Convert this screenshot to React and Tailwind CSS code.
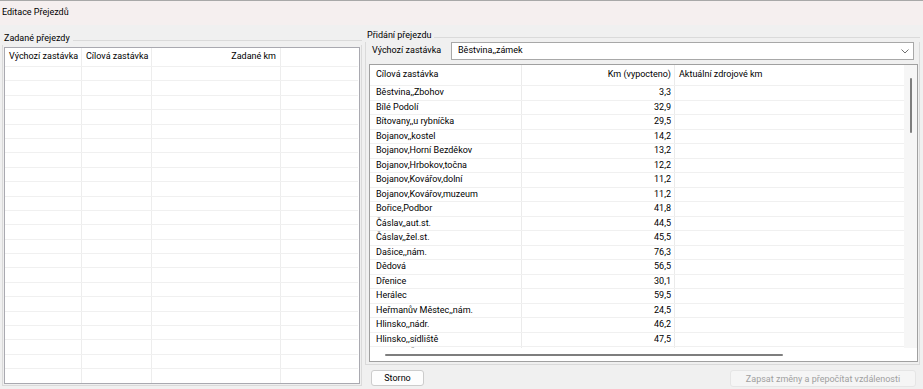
import React from 'react';

const targets = [
  ['Běstvina,,Zbohov', '3,3'],
  ['Bílé Podolí', '32,9'],
  ['Bítovany,,u rybníčka', '29,5'],
  ['Bojanov,,kostel', '14,2'],
  ['Bojanov,Horní Bezděkov', '13,2'],
  ['Bojanov,Hrbokov,točna', '12,2'],
  ['Bojanov,Kovářov,dolní', '11,2'],
  ['Bojanov,Kovářov,muzeum', '11,2'],
  ['Bořice,Podbor', '41,8'],
  ['Čáslav,,aut.st.', '44,5'],
  ['Čáslav,,žel.st.', '45,5'],
  ['Dašice,,nám.', '76,3'],
  ['Dědová', '56,5'],
  ['Dřenice', '30,1'],
  ['Herálec', '59,5'],
  ['Heřmanův Městec,,nám.', '24,5'],
  ['Hlinsko,,nádr.', '46,2'],
  ['Hlinsko,,sídliště', '47,5'],
  ['Hlinsko,,Čertovina', '47,9'],
];

function GroupLabel({ text }) {
  return (
    <div className="flex items-center h-[14px] shrink-0">
      <span className="pl-[2px] pr-[3px] leading-[14px] whitespace-nowrap">{text}</span>
      <div className="flex-1 h-px bg-[#dadada] mt-[4px]" />
    </div>
  );
}

function EmptyTable() {
  const rows = Array.from({ length: 22 });
  return (
    <div className="h-[337px] border border-[#a9a9b0] bg-white overflow-hidden">
      <div className="flex h-[18px] items-center whitespace-nowrap">
        <div className="w-[77px] pl-[4px] border-r border-[#ededed] h-full flex items-center">Výchozí zastávka</div>
        <div className="w-[70px] pl-[4px] border-r border-[#ededed] h-full flex items-center">Cílová zastávka</div>
        <div className="w-[129px] pr-[4px] border-r border-[#ededed] h-full flex items-center justify-end">Zadané km</div>
        <div className="flex-1" />
      </div>
      {rows.map((_, i) => (
        <div key={i} className="flex h-[14.4px] border-t border-[#f0f0f0] mr-[1px]">
          <div className="w-[77px] border-r border-[#ededed]" />
          <div className="w-[70px] border-r border-[#ededed]" />
          <div className="w-[129px] border-r border-[#ededed]" />
          <div className="flex-1" />
        </div>
      ))}
    </div>
  );
}

function TargetTable() {
  return (
    <div className="h-[298px] border border-[#a0a0a0] bg-white flex flex-col">
      <div className="flex flex-1 min-h-0">
        <div className="flex-1 overflow-hidden">
          <div className="flex h-[20px] items-center whitespace-nowrap">
            <div className="w-[152px] pl-[6px] border-r border-[#ebebeb] h-full flex items-center">Cílová zastávka</div>
            <div className="w-[153px] pr-[3px] border-r border-[#ebebeb] h-full flex items-center justify-end">Km (vypocteno)</div>
            <div className="flex-1 pl-[4px] h-full flex items-center">Aktuální zdrojové km</div>
          </div>
          {targets.map(([name, km]) => (
            <div key={name} className="flex h-[14.5px] border-t border-[#f0f0f0] leading-[13px]">
              <div className="w-[152px] pl-[6px] border-r border-[#ebebeb] whitespace-nowrap">{name}</div>
              <div className="w-[153px] pr-[3px] border-r border-[#ebebeb] text-right">{km}</div>
              <div className="flex-1" />
            </div>
          ))}
        </div>
        <div className="w-[13px] bg-[#f6f6f6] flex justify-center pt-[13px]">
          <div className="w-[2px] h-[55px] bg-[#7e7e7e] rounded-full" />
        </div>
      </div>
      <div className="h-[13px] shrink-0 flex items-center pl-[15px]">
        <div className="w-[398px] h-[2px] bg-[#7e7e7e] rounded-full" />
      </div>
    </div>
  );
}

export default function App() {
  return (
    <div className="w-[923px] h-[389px] bg-[#f0f0f0] flex flex-col text-[9px] text-[#000000] font-['Roboto','Liberation_Sans',sans-serif] overflow-hidden">
      <div className="h-[25px] shrink-0 bg-[#f5efef] border-t border-[#a8a8a8] flex items-center pl-[2px]">
        Editace Přejezdů
      </div>
      <div className="flex flex-1 px-[2px] gap-[3px]">
        <div className="w-[360px] mt-[6px] flex flex-col self-start">
          <GroupLabel text="Zadané přejezdy" />
          <div className="border-x border-b border-[#dadada] pt-[2px] px-[1px] pb-[1px]">
            <EmptyTable />
          </div>
        </div>
        <div className="w-[555px] mt-[3px] flex flex-col">
          <GroupLabel text="Přidání přejezdu" />
          <div className="border-x border-b border-[#dadada] pl-[3px] pr-[1px] pb-[2px]">
            <div className="flex items-center h-[18px]">
              <div className="w-[82px] pl-[3px] whitespace-nowrap">Výchozí zastávka</div>
              <div className="w-[463px] h-[18px] bg-white border border-[#a8a8a8] flex items-center justify-between pl-[6px] pr-[4px]">
                <span>Běstvina,,zámek</span>
                <svg width="8" height="5" viewBox="0 0 8 5" fill="none">
                  <polyline points="0.5,0.5 4,4 7.5,0.5" stroke="#707070" strokeWidth="1" />
                </svg>
              </div>
            </div>
            <div className="mt-[4px]">
              <TargetTable />
            </div>
          </div>
          <div className="flex justify-between items-start mt-[5px] pl-[6px] pr-[4px]">
            <button className="w-[53px] h-[16px] bg-[#fdfdfd] border border-[#cccccc] rounded-[3px] flex items-center justify-center text-[9px] leading-[12px] text-[#000000]">
              Storno
            </button>
            <button disabled className="w-[186px] h-[17px] bg-[#f5f5f5] border border-[#e5e5e5] rounded-[3px] flex items-center justify-center text-[9px] leading-[12px] text-[#a0a0a0] whitespace-nowrap">
              Zapsat změny a přepočítat vzdálenosti
            </button>
          </div>
        </div>
      </div>
    </div>
  );
}
